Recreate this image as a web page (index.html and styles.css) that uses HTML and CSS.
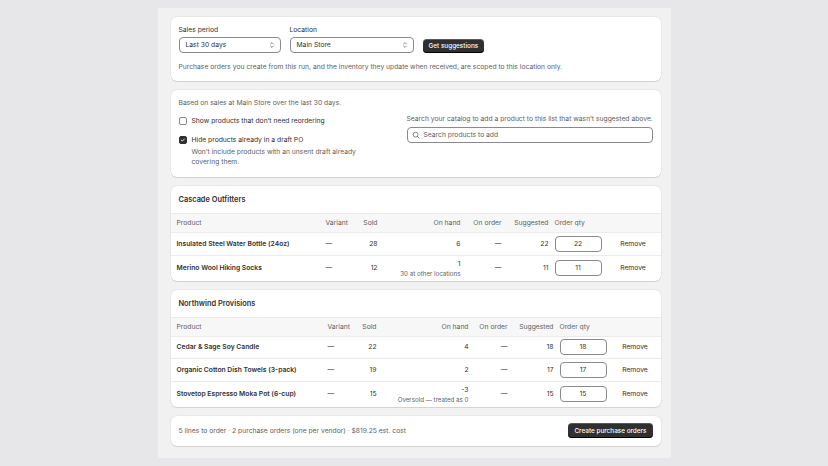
FILE: index.html
```html
<!DOCTYPE html>
<html>
<head>
<meta charset="utf-8">
<link rel="stylesheet" href="styles.css">
</head>
<body>
<div class="page">
  <section class="card card-run">
    <div class="run-row">
      <label class="field field-period">
        <span class="field-label">Sales period</span>
        <span class="select"><span>Last 30 days</span><svg class="chev" viewBox="0 0 8 8" width="8" height="8"><path d="M2.6 3 4 1.6 5.4 3M2.6 5 4 6.4 5.4 5" fill="none" stroke="#616161" stroke-width=".75" stroke-linecap="round" stroke-linejoin="round"/></svg></span>
      </label>
      <label class="field field-location">
        <span class="field-label">Location</span>
        <span class="select"><span>Main Store</span><svg class="chev" viewBox="0 0 8 8" width="8" height="8"><path d="M2.6 3 4 1.6 5.4 3M2.6 5 4 6.4 5.4 5" fill="none" stroke="#616161" stroke-width=".75" stroke-linecap="round" stroke-linejoin="round"/></svg></span>
      </label>
      <button class="btn-primary">Get suggestions</button>
    </div>
    <p class="muted run-note">Purchase orders you create from this run, and the inventory they update when received, are scoped to this location only.</p>
  </section>

  <section class="card card-filters">
    <p class="muted">Based on sales at Main Store over the last 30 days.</p>
    <div class="filter-grid">
      <div class="checks">
        <div class="check-row">
          <span class="box"></span>
          <span>Show products that don’t need reordering</span>
        </div>
        <div class="check-row">
          <span class="box box-on"><svg viewBox="0 0 8 8" width="8" height="8"><path d="M2.3 4.1 3.5 5.2 5.7 2.9" fill="none" stroke="#fff" stroke-width=".9" stroke-linecap="round" stroke-linejoin="round"/></svg></span>
          <span>Hide products already in a draft PO</span>
        </div>
        <p class="muted check-hint">Won’t include products with an unsent draft already covering them.</p>
      </div>
      <div class="search-col">
        <p class="muted nowrap">Search your catalog to add a product to this list that wasn’t suggested above.</p>
        <div class="search">
          <svg viewBox="0 0 8 8" width="8" height="8"><circle cx="3.6" cy="3.6" r="2.4" fill="none" stroke="#616161" stroke-width=".75"/><path d="M5.4 5.4 7 7" stroke="#616161" stroke-width=".75" stroke-linecap="round"/></svg>
          <span>Search products to add</span>
        </div>
      </div>
    </div>
  </section>

  <section class="card vendor">
    <h2 class="vendor-title">Cascade Outfitters</h2>
    <table class="lines lines-a">
      <colgroup><col class="w-prod"><col class="w-var"><col class="w-sold"><col class="w-hand"><col class="w-ord"><col class="w-sug"><col class="w-qty"><col class="w-act"></colgroup>
      <thead>
        <tr><th class="c-prod">Product</th><th class="c-var">Variant</th><th class="num">Sold</th><th class="num">On hand</th><th class="num">On order</th><th class="num">Suggested</th><th class="c-qty">Order qty</th><th class="c-act"></th></tr>
      </thead>
      <tbody>
        <tr><td class="c-prod">Insulated Steel Water Bottle (24oz)</td><td class="c-var">—</td><td class="num">28</td><td class="num">6</td><td class="num">—</td><td class="num">22</td><td class="c-qty"><span class="qty">22</span></td><td class="c-act">Remove</td></tr>
        <tr class="tall"><td class="c-prod">Merino Wool Hiking Socks</td><td class="c-var">—</td><td class="num">12</td><td class="num">1<span class="sub">30 at other locations</span></td><td class="num">—</td><td class="num">11</td><td class="c-qty"><span class="qty">11</span></td><td class="c-act">Remove</td></tr>
      </tbody>
    </table>
  </section>

  <section class="card vendor">
    <h2 class="vendor-title">Northwind Provisions</h2>
    <table class="lines lines-b">
      <colgroup><col class="w-prod"><col class="w-var"><col class="w-sold"><col class="w-hand"><col class="w-ord"><col class="w-sug"><col class="w-qty"><col class="w-act"></colgroup>
      <thead>
        <tr><th class="c-prod">Product</th><th class="c-var">Variant</th><th class="num">Sold</th><th class="num">On hand</th><th class="num">On order</th><th class="num">Suggested</th><th class="c-qty">Order qty</th><th class="c-act"></th></tr>
      </thead>
      <tbody>
        <tr><td class="c-prod">Cedar &amp; Sage Soy Candle</td><td class="c-var">—</td><td class="num">22</td><td class="num">4</td><td class="num">—</td><td class="num">18</td><td class="c-qty"><span class="qty">18</span></td><td class="c-act">Remove</td></tr>
        <tr><td class="c-prod">Organic Cotton Dish Towels (3-pack)</td><td class="c-var">—</td><td class="num">19</td><td class="num">2</td><td class="num">—</td><td class="num">17</td><td class="c-qty"><span class="qty">17</span></td><td class="c-act">Remove</td></tr>
        <tr class="tall"><td class="c-prod">Stovetop Espresso Moka Pot (6-cup)</td><td class="c-var">—</td><td class="num">15</td><td class="num">-3<span class="sub">Oversold — treated as 0</span></td><td class="num">—</td><td class="num">15</td><td class="c-qty"><span class="qty">15</span></td><td class="c-act">Remove</td></tr>
      </tbody>
    </table>
  </section>

  <section class="card summary">
    <p class="muted">5 lines to order · 2 purchase orders (one per vendor) · $819.25 est. cost</p>
    <button class="btn-primary">Create purchase orders</button>
  </section>
</div>
</body>
</html>
```

FILE: styles.css
```css
* { box-sizing: border-box; }
html, body { margin: 0; padding: 0; }
body {
  background: #e7e6e9;
  font-family: Inter, "Noto Sans", sans-serif;
  font-size: 6.75px;
  line-height: 10px;
  color: #303030;
  padding: 8px 0;
}
p { margin: 0; }
.nowrap { white-space: nowrap; }
.page {
  width: 513px;
  height: 450px;
  margin: 0 auto;
  background: #f1f1f1;
  padding: 9px 10px 10px 13px;
  display: flex;
  flex-direction: column;
  gap: 9px;
  overflow: hidden;
}
.card {
  background: #fff;
  border-radius: 6px;
  box-shadow: 0 0 0 0.5px rgba(0,0,0,0.07), 0 1px 1px rgba(0,0,0,0.1);
}
.muted { color: #616161; }

.card-run { padding: 8px 8px 9px; }
.run-row { display: flex; align-items: flex-end; gap: 9px; }
.field { display: flex; flex-direction: column; gap: 2px; }
.field-label { color: #303030; }
.select {
  display: flex; align-items: center; justify-content: space-between;
  height: 16px; padding: 0 4px 0 6px;
  border: 1px solid #8a8a8a; border-radius: 4px; background: #fff;
}
.field-period .select { width: 102px; }
.field-location .select { width: 124px; }
.btn-primary {
  font: inherit; font-size: 6.4px; font-weight: 500; color: #fff;
  background: #303030; border: 0; border-radius: 4px;
  height: 14px; padding: 0 6px; line-height: 14px;
  box-shadow: inset 0 -1px 0 #000, inset 0 1px 0 rgba(255,255,255,.2);
}
.run-note { margin-top: 9px; }

.card-filters { padding: 8px 8px 10px; }
.filter-grid {
  display: grid; grid-template-columns: 200px 246px; justify-content: space-between;
  align-items: start;
  margin-top: 8px;
}
.checks { display: flex; flex-direction: column; gap: 9px; }
.check-row { display: flex; align-items: center; gap: 5px; white-space: nowrap; }
.box {
  width: 8px; height: 8px; border: 0.8px solid #8a8a8a; border-radius: 2px;
  display: inline-flex; background: #fff; flex: none;
}
.box-on { background: #303030; border-color: #303030; }
.box-on svg { margin: -0.8px; }
.check-hint { margin-top: -7px; padding-left: 13px; }
.search-col { display: flex; flex-direction: column; gap: 3px; margin-top: -2px; }
.search {
  height: 16px; border: 1px solid #8a8a8a; border-radius: 4px;
  display: flex; align-items: center; gap: 4px; padding: 0 4px; color: #616161;
}

.vendor { overflow: hidden; }
.vendor-title {
  margin: 0; font-size: 7.4px; font-weight: 600; line-height: 10px;
  padding: 9px 8px 8px;
}
.lines { width: 100%; border-collapse: collapse; table-layout: fixed; }
.lines-a .w-prod { width: 151px; }
.lines-a .w-var { width: 29px; }
.lines-a .w-sold { width: 31px; }
.lines-a .w-hand { width: 83px; }
.lines-a .w-ord { width: 41px; }
.lines-a .w-sug { width: 47px; }
.lines-a .w-qty { width: 53px; }
.lines-a .w-act { width: 55px; }
.lines-b .w-prod { width: 153px; }
.lines-b .w-var { width: 29px; }
.lines-b .w-sold { width: 28px; }
.lines-b .w-hand { width: 92px; }
.lines-b .w-ord { width: 39px; }
.lines-b .w-sug { width: 46px; }
.lines-b .w-qty { width: 52px; }
.lines-b .w-act { width: 51px; }
.lines th {
  background: #f7f7f7; color: #616161; font-weight: 400;
  height: 19px; padding: 0 4px; text-align: left; white-space: nowrap;
  border-top: 1px solid #ebebeb; border-bottom: 1px solid #ebebeb;
}
.lines td {
  height: 23px; padding: 0 4px; white-space: nowrap;
  border-top: 1px solid #ebebeb;
}
.lines-b tbody tr:first-child td { height: 22px; }
.lines tr.tall td { height: 25px; }
.lines-b tr.tall td { height: 26px; }
.lines .c-prod { padding-left: 6px; }
.lines td.c-prod { font-weight: 600; }
.lines .num { text-align: right; }
.lines .c-qty { padding: 0 3px 0 2px; }
.sub { display: block; color: #616161; font-size: 6.2px; line-height: 9px; }
.qty {
  display: inline-flex; align-items: center; justify-content: center;
  width: 47px; height: 16px; border: 1px solid #8a8a8a; border-radius: 4px;
}
.lines .c-act { text-align: center; }

.summary {
  display: flex; align-items: center; justify-content: space-between;
  padding: 7px 8px 8px; height: 30px;
}
.summary .btn-primary { height: 15px; }
```
